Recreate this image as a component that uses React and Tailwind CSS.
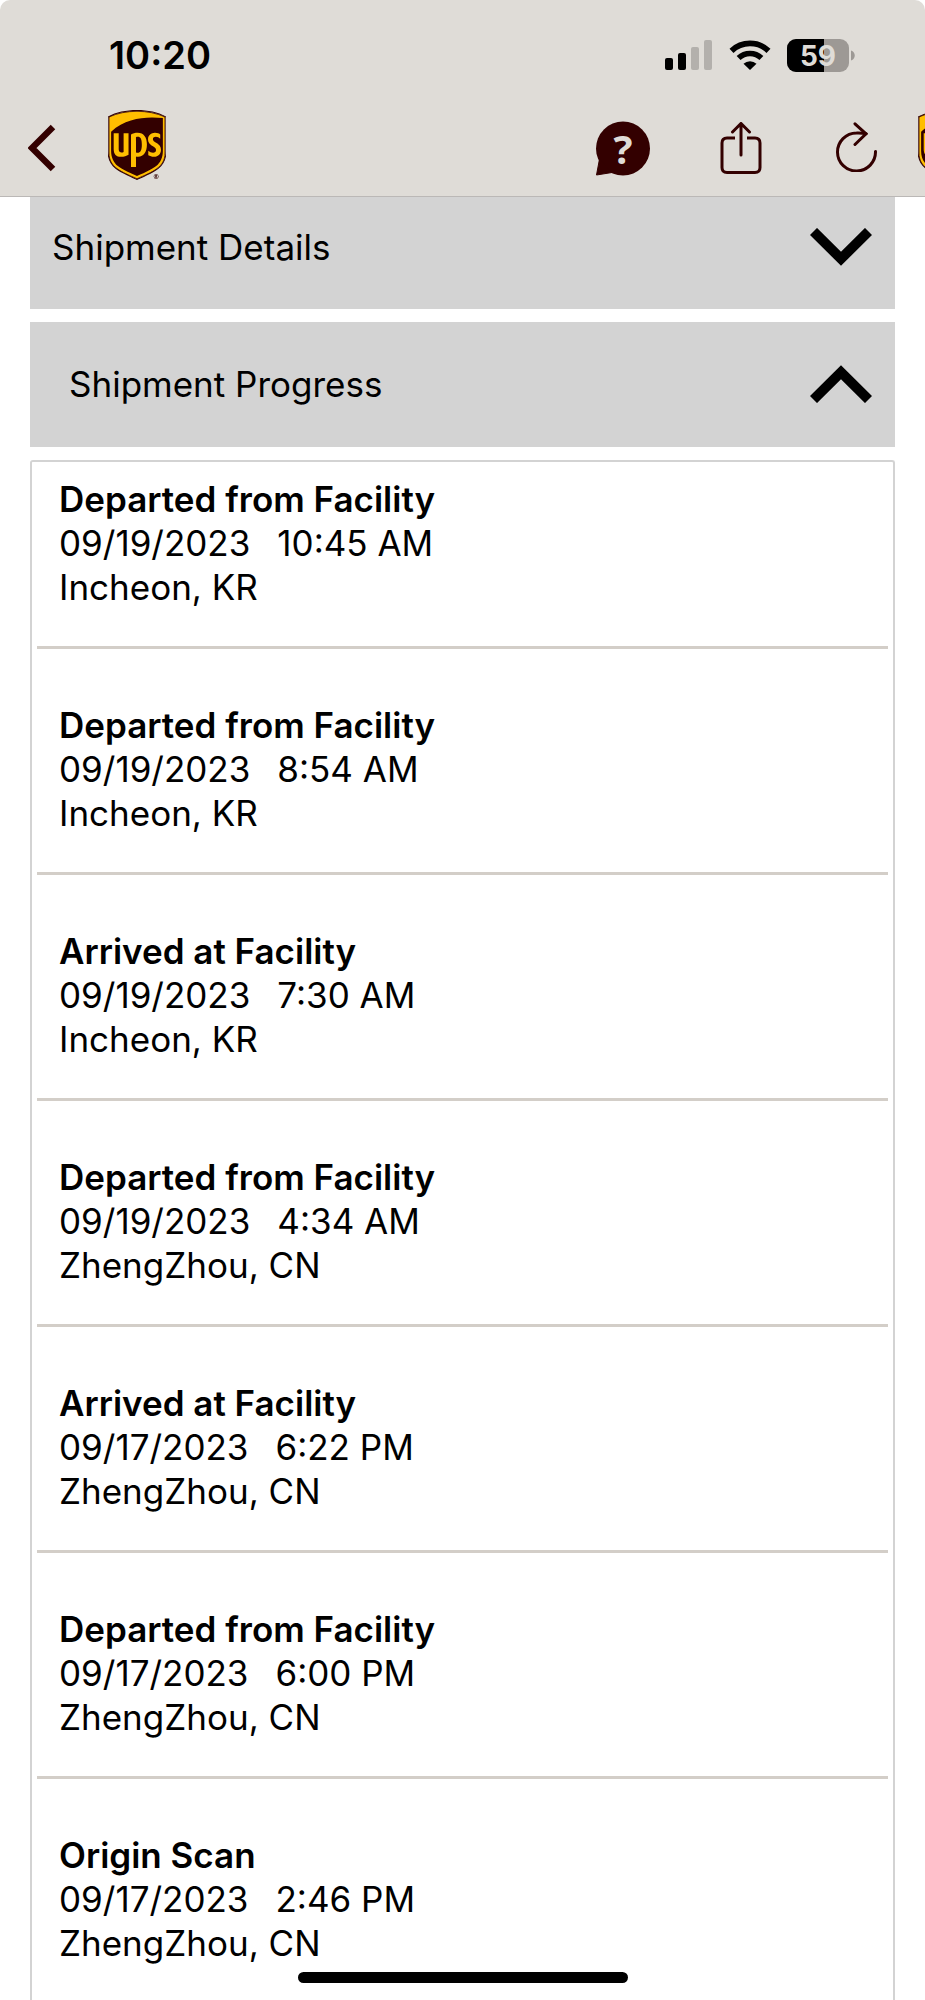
import React from 'react';
import { SiUps } from 'react-icons/si';

const events = [
  { status: 'Departed from Facility', date: '09/19/2023', time: '10:45 AM', place: 'Incheon, KR' },
  { status: 'Departed from Facility', date: '09/19/2023', time: '8:54 AM', place: 'Incheon, KR' },
  { status: 'Arrived at Facility', date: '09/19/2023', time: '7:30 AM', place: 'Incheon, KR' },
  { status: 'Departed from Facility', date: '09/19/2023', time: '4:34 AM', place: 'ZhengZhou, CN' },
  { status: 'Arrived at Facility', date: '09/17/2023', time: '6:22 PM', place: 'ZhengZhou, CN' },
  { status: 'Departed from Facility', date: '09/17/2023', time: '6:00 PM', place: 'ZhengZhou, CN' },
  { status: 'Origin Scan', date: '09/17/2023', time: '2:46 PM', place: 'ZhengZhou, CN' },
];

function UpsLogo() {
  return (
    <svg viewBox="0 0 58 70" className="w-[58px] h-[70px] shrink-0" aria-label="UPS">
      <path
        d="M1 7 C17 -0.6 41 -0.6 57 7 V43 C57 57.5 45 61.5 29 68.8 C13 61.5 1 57.5 1 43 Z"
        fill="#ffbe00"
        stroke="#330000"
        strokeWidth="0.8"
      />
      <SiUps x="-6" y="0" size={70} color="#330000" />
    </svg>
  );
}

function SignalIcon() {
  return (
    <svg viewBox="0 0 48 30" className="w-12 h-[30px]">
      <rect x="0" y="18" width="8" height="12" rx="2" />
      <rect x="13" y="13" width="8" height="17" rx="2" />
      <rect x="26" y="7" width="8" height="23" rx="2" fill="#b3b0ac" />
      <rect x="39" y="0" width="8" height="30" rx="2" fill="#b3b0ac" />
    </svg>
  );
}

function WifiIcon() {
  return (
    <svg viewBox="0 0 42 30" className="w-[42px] h-[30px]">
      <path d="M2.5 10.8 A27 27 0 0 1 39.5 10.8" fill="none" stroke="#000" strokeWidth="5.8" />
      <path d="M9.6 18 A16.5 16.5 0 0 1 32.4 18" fill="none" stroke="#000" strokeWidth="5.6" />
      <path d="M21 30 L14.5 23.8 A9.5 9.5 0 0 1 27.5 23.8 Z" />
    </svg>
  );
}

function BatteryIcon() {
  return (
    <svg viewBox="0 0 69 33" className="w-[69px] h-[33px]">
      <rect x="0" y="0" width="62" height="33" rx="9" fill="#9d9995" />
      <path d="M9 0 H37 V33 H9 A9 9 0 0 1 0 24 V9 A9 9 0 0 1 9 0 Z" />
      <path d="M64 11.5 C69 13 69 20 64 21.5 Z" fill="#9d9995" />
      <text
        x="31"
        y="27"
        textAnchor="middle"
        fill="#dfdcd7"
        className="font-['Inter',sans-serif] text-[28px] font-bold"
      >
        59
      </text>
    </svg>
  );
}

function StatusBar() {
  return (
    <div className="flex items-center h-[110px] pl-[109px] pr-[69px]">
      <span className="text-[38px] leading-[44px] font-semibold">10:20</span>
      <div className="ml-auto flex items-center gap-4">
        <SignalIcon />
        <WifiIcon />
        <BatteryIcon />
      </div>
    </div>
  );
}

function NavBar() {
  return (
    <nav className="flex items-center h-[86px] pl-7 pb-4">
      <button type="button" aria-label="Back">
        <svg viewBox="0 0 28 48" className="w-7 h-12 mt-1.5">
          <path d="M25 3 L4 24 L25 45" fill="none" stroke="#330000" strokeWidth="6.4" />
        </svg>
      </button>
      <a href="#home" className="ml-[52px] shrink-0">
        <UpsLogo />
      </a>
      <div className="ml-auto -mr-[51px] flex items-center">
        <button type="button" aria-label="Help">
          <svg viewBox="0 0 54 55" className="w-[54px] h-[55px] mt-1.5">
            <circle cx="27" cy="27.5" r="27" fill="#330000" />
            <path d="M3.5 38 L0.5 54 L16 51.5 Z" fill="#330000" stroke="#330000" strokeLinejoin="round" />
            <text
              x="27"
              y="43"
              textAnchor="middle"
              fill="#dfdcd7"
              className="font-['Open_Sans',sans-serif] text-[40px] font-bold"
            >
              ?
            </text>
          </svg>
        </button>
        <button type="button" aria-label="Share" className="ml-[70px]">
          <svg
            viewBox="0 0 42 52"
            className="w-[42px] h-[52px] mt-1.5"
            fill="none"
            stroke="#330000"
            strokeWidth="3"
            strokeLinecap="round"
          >
            <path d="M15 16 H7 Q2 16 2 21 V45.5 Q2 50.5 7 50.5 H35 Q40 50.5 40 45.5 V21 Q40 16 35 16 H27" strokeLinecap="butt" />
            <path d="M21 33 V1.8 M12.5 10 L21 1.5 L29.5 10" />
          </svg>
        </button>
        <button type="button" aria-label="Reload" className="ml-[74px]">
          <svg
            viewBox="0 0 42 50"
            className="w-[42px] h-[50px] mt-1"
            fill="none"
            stroke="#330000"
            strokeWidth="3"
            strokeLinecap="round"
          >
            <path d="M39.5 29.5 A19 19 0 1 1 20.5 11 Q26 10.8 30 11.8" />
            <path d="M19 1.8 L30 11.8 L19 22.5" />
          </svg>
        </button>
        <a href="#home" className="ml-10 shrink-0">
          <UpsLogo />
        </a>
      </div>
    </nav>
  );
}

function Chevron({ open }) {
  return (
    <svg viewBox="0 0 62 38" className="w-[62px] h-[38px]">
      <path
        d={open ? 'M3.5 34.5 L31 7.3 L58.5 34.5' : 'M3.5 3.5 L31 30.7 L58.5 3.5'}
        fill="none"
        stroke="#000"
        strokeWidth="10"
      />
    </svg>
  );
}

function EventRow({ event }) {
  return (
    <li className="mx-[5px] pl-[22px] pt-[54px] first:pt-[15px] pb-[37px] border-b-[3px] border-[#d3cec8] last:border-b-0 last:pb-0">
      <p className="font-semibold">{event.status}</p>
      <p className="flex gap-[27px]">
        <span>{event.date}</span>
        <span>{event.time}</span>
      </p>
      <p>{event.place}</p>
    </li>
  );
}

export default function App() {
  return (
    <div className="min-h-screen flex flex-col bg-white text-black font-['Inter',sans-serif] text-[35px] leading-[44px]">
      <header className="relative z-10 overflow-hidden rounded-t-[10px] bg-[#dfdcd7] border-b border-[#bbb8b6]">
        <StatusBar />
        <NavBar />
      </header>

      {/* first panel is scrolled partly under the header */}
      <main className="flex-1 flex flex-col gap-[13px] px-[30px] -mt-[13px]">
        <button type="button" aria-expanded="false" className="flex items-center justify-between h-[125px] shrink-0 pl-[22px] pr-[23px] bg-[#d3d3d3]">
          <span>Shipment Details</span>
          <Chevron />
        </button>
        <button type="button" aria-expanded="true" className="flex items-center justify-between h-[125px] shrink-0 pl-[39px] pr-[23px] pb-0.5 bg-[#d3d3d3]">
          <span>Shipment Progress</span>
          <Chevron open />
        </button>
        <ul className="flex-1 border-2 border-b-0 border-[#d3d3d3] rounded-t-[3px]">
          {events.map((event, idx) => (
            <EventRow key={idx} event={event} />
          ))}
        </ul>
      </main>

      {/* home indicator */}
      <div className="fixed bottom-[17px] inset-x-0 mx-auto w-[330px] h-[11px] rounded-full bg-black"></div>
    </div>
  );
}
